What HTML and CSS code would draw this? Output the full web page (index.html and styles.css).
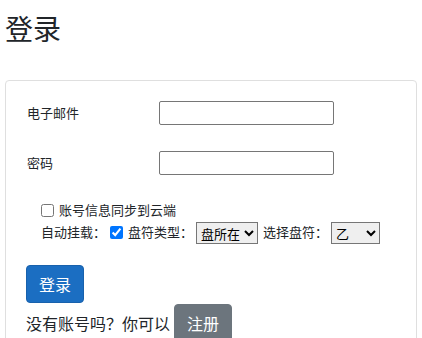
FILE: index.html
```html
<!DOCTYPE html>
<html lang="zh-CN">
<head>
    <meta charset="UTF-8">
    <meta name="viewport" content="width=device-width, initial-scale=1.0">
    <title>登录</title>
    <link rel="stylesheet" href="styles.css">
</head>
<body>
    <h3 class="title">登录</h3>
    <div class="card">
        <div class="form-row">
            <label class="form-label" for="email">电子邮件</label>
            <input class="form-input" id="email" type="email">
        </div>
        <div class="form-row">
            <label class="form-label" for="password">密码</label>
            <input class="form-input" id="password" type="password">
        </div>
        <div class="options">
            <div class="option-line">
                <label><input type="checkbox" class="check first">账号信息同步到云端</label>
            </div>
            <div class="option-line">
                自动挂载：<input type="checkbox" class="check" checked>盘符类型：<select class="pick">
                    <option>盘所在</option>
                </select>选择盘符：<select class="pick letter">
                    <option>乙</option>
                </select>
            </div>
        </div>
        <button class="btn btn-primary">登录</button>
        <div class="signup">没有账号吗？你可以<button class="btn btn-secondary">注册</button></div>
    </div>
</body>
</html>
```

FILE: styles.css
```css
body {
    font-family: "Noto Sans CJK SC", "Noto Sans", sans-serif;
    color: #212529;
    background-color: #fff;
    margin: 0;
    padding: 0 5px;
}

.title {
    font-size: 28px;
    font-weight: normal;
    line-height: 1.2;
    margin: 12px 0 34px 0;
}

.card {
    border: 1px solid #dfdfdf;
    border-radius: 4px;
    padding: 20px 20px 0 20px;
    height: 300px;
}

.form-row {
    display: flex;
    align-items: center;
    margin-bottom: 26px;
}

.form-label {
    width: 132px;
    padding-left: 1px;
    font-size: 13px;
}

.form-input {
    width: 175px;
    height: 24px;
    box-sizing: border-box;
    border: 1px solid #767676;
    border-radius: 2px;
    margin: 0;
}

.options {
    padding-left: 15px;
    font-size: 13px;
    margin-top: -2px;
}

.option-line {
    line-height: 22px;
    white-space: nowrap;
}

.check {
    width: 13px;
    height: 13px;
    margin: 0 5px 0 0;
    vertical-align: -2px;
}

.option-line .check {
    margin-left: 4px;
}

.option-line .check.first {
    margin-left: 0;
}

.pick {
    font-family: inherit;
    font-size: 13px;
    height: 22px;
    margin: 0 5px 0 3px;
    border: 1px solid #767676;
    border-radius: 0;
    padding: 0;
    vertical-align: middle;
}

.pick.letter {
    width: 49px;
    margin-left: 3px;
}

.btn {
    font-family: inherit;
    font-size: 16px;
    line-height: 1.5;
    color: #fff;
    padding: 6px 12px;
    border-radius: 4px;
    border: 1px solid transparent;
    cursor: pointer;
}

.btn-primary {
    background-color: #1b6ec2;
    border-color: #1861ac;
    margin-top: 21px;
    display: block;
}

.btn-secondary {
    background-color: #6c757d;
    border-color: #6c757d;
    margin-left: 4px;
}

.signup {
    font-size: 16px;
    margin-top: 1px;
}
```
